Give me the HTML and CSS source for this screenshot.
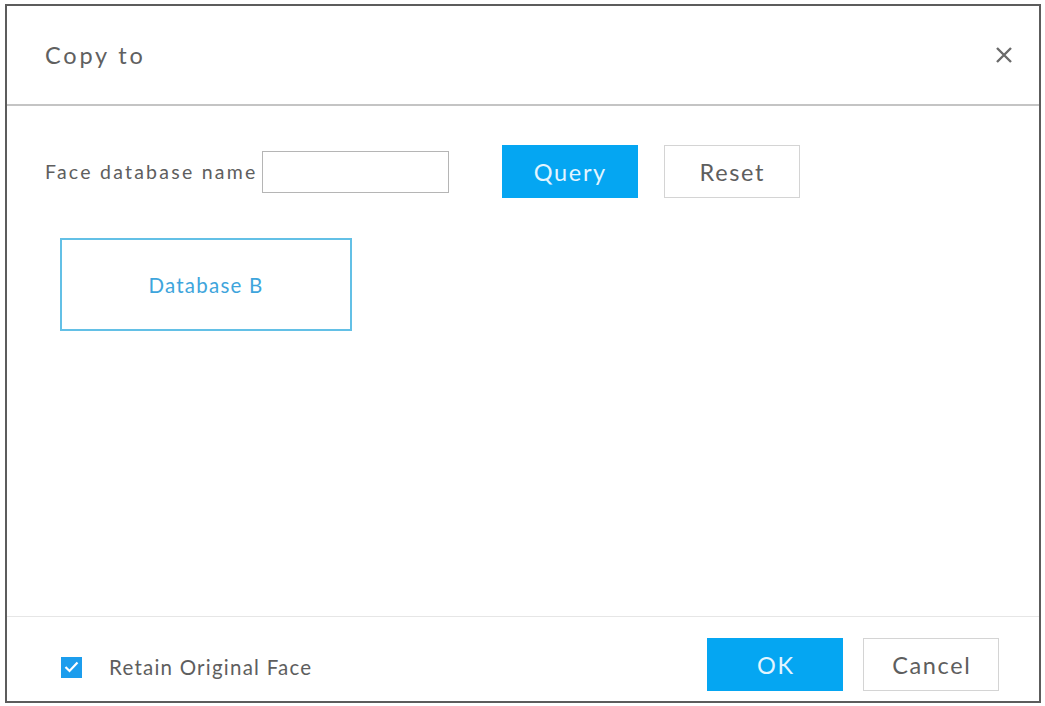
FILE: index.html
```html
<!DOCTYPE html>
<html lang="en">
<head>
    <meta charset="UTF-8">
    <title>Copy to</title>
    <link rel="stylesheet" href="styles.css">
</head>
<body>
    <div class="dialog">
        <div class="dialog-header">
            <div class="dialog-title">Copy to</div>
            <div class="close-btn">
                <svg width="20" height="20" viewBox="0 0 20 20">
                    <path d="M3 3 L17 17 M17 3 L3 17" stroke="#6a6a6a" stroke-width="2.4" fill="none"/>
                </svg>
            </div>
        </div>
        <div class="dialog-body">
            <div class="search-row">
                <label class="search-label">Face database name</label>
                <input type="text" class="search-input">
                <button class="btn btn-primary btn-query">Query</button>
                <button class="btn btn-default">Reset</button>
            </div>
            <div class="db-list">
                <div class="db-card active">Database B</div>
            </div>
        </div>
        <div class="dialog-footer">
            <label class="check">
                <span class="check-box">
                    <svg width="15" height="12" viewBox="0 0 15 12">
                        <path d="M1.5 6 L5.5 10 L13.5 1.5" stroke="#fff" stroke-width="2.2" fill="none"/>
                    </svg>
                </span>
                Retain Original Face
            </label>
            <div class="footer-btns">
                <button class="btn btn-primary">OK</button>
                <button class="btn btn-default">Cancel</button>
            </div>
        </div>
    </div>
</body>
</html>
```

FILE: styles.css
```css
body {
    margin: 0;
    padding: 0;
    background-color: #fff;
    font-family: Lato, "Open Sans", sans-serif;
    color: #5a5a5a;
    letter-spacing: 0.08em;
}
.dialog {
    margin: 4px 0 0 5px;
    width: 1036px;
    height: 699px;
    box-sizing: border-box;
    border: 2px solid #5c5c5c;
    display: flex;
    flex-direction: column;
}
.dialog-header {
    height: 98px;
    flex-shrink: 0;
    display: flex;
    align-items: center;
    justify-content: space-between;
    padding: 0 25px 0 38px;
    border-bottom: 2px solid #c4c4c4;
}
.dialog-title {
    font-size: 23.5px;
    letter-spacing: 0.12em;
    color: #606060;
}
.close-btn {
    display: flex;
    cursor: pointer;
}
.dialog-body {
    flex: 1;
    padding: 39px 38px 0 38px;
}
.search-row {
    display: flex;
    align-items: center;
}
.search-label {
    font-size: 19.5px;
    letter-spacing: 0.115em;
    color: #5e5e5e;
    margin-right: 4px;
}
.search-input {
    width: 187px;
    height: 42px;
    box-sizing: border-box;
    border: 1px solid #b5b5b5;
    padding: 0 8px;
    margin-right: 53px;
    font-size: 16px;
    outline: none;
}
.btn {
    width: 136px;
    height: 53px;
    box-sizing: border-box;
    font-family: Lato, "Open Sans", sans-serif;
    font-size: 23.5px;
    letter-spacing: 0.07em;
    text-indent: 0.07em;
    cursor: pointer;
}
.btn-primary {
    background-color: #05a6f2;
    border: none;
    color: #e3f5ff;
}
.btn-default {
    background-color: #fff;
    border: 1px solid #d4d4d4;
    color: #5e5e5e;
}
.btn-query {
    margin-right: 26px;
}
.db-list {
    display: flex;
    padding: 40px 0 0 15px;
}
.db-card {
    width: 292px;
    height: 93px;
    box-sizing: border-box;
    border: 2px solid #63c0e6;
    display: flex;
    align-items: center;
    justify-content: center;
    color: #3ea5dc;
    font-size: 20.5px;
    letter-spacing: 0.06em;
    cursor: pointer;
}
.dialog-footer {
    height: 85px;
    box-sizing: border-box;
    flex-shrink: 0;
    border-top: 1px solid #e6e6e6;
    display: flex;
    align-items: flex-start;
    justify-content: space-between;
    padding: 21px 40px 0 54px;
}
.check {
    display: flex;
    align-items: center;
    font-size: 20.5px;
    letter-spacing: 0.06em;
    color: #5e5e5e;
    margin-top: 17px;
}
.check-box {
    width: 21px;
    height: 21px;
    background-color: #1c9ded;
    display: flex;
    align-items: center;
    justify-content: center;
    margin-right: 27px;
}
.footer-btns {
    display: flex;
    gap: 20px;
}
```
